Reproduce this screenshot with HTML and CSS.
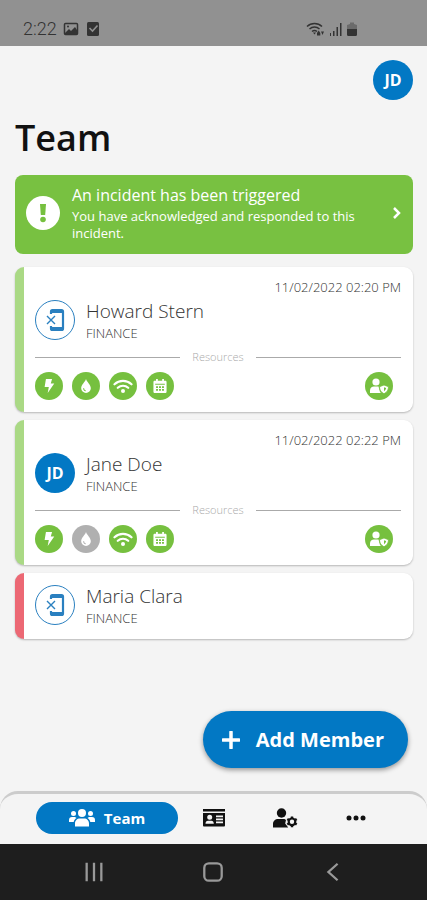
FILE: index.html
```html
<!DOCTYPE html>
<html lang="en">

<head>
    <meta charset="UTF-8">
    <meta name="viewport" content="width=device-width, initial-scale=1.0">
    <title>Team</title>
    <link rel="stylesheet" href="styles.css">
</head>

<body>

    <!-- shared icons -->
    <svg class="sprite" aria-hidden="true">
        <symbol id="bolt" viewBox="0 0 16 16">
            <path d="M4.500 0h7L10 5h4L6.500 16l1.300-6.800H3z" />
        </symbol>
        <symbol id="drop" viewBox="0 0 16 16">
            <path d="M8 0C9 3.500 13.500 6.500 13.500 10.500a5.500 5.500 0 0 1-11 0C2.500 6.500 7 3.500 8 0zM5 10.200c-.6 2 .8 3.700 2.800 3.700v-.9c-1.400 0-2.200-1.200-1.900-2.600z" fill-rule="evenodd" />
        </symbol>
        <symbol id="wifi" viewBox="0 0 20 16">
            <path d="M1.500 6.300a12.500 12.500 0 0 1 17 0M4.800 9.800a7.600 7.600 0 0 1 10.400 0" fill="none" stroke="currentColor" stroke-width="2.200" stroke-linecap="round" />
            <circle cx="10" cy="13" r="2" />
        </symbol>
        <symbol id="calendar" viewBox="0 0 16 16">
            <path fill-rule="evenodd" d="M3.500 0h2v2h5V0h2v2H14c.8 0 1.500.6 1.500 1.400v11.200c0 .8-.7 1.400-1.500 1.400H2C1.200 16 .5 15.400.5 14.600V3.400C.5 2.600 1.200 2 2 2h1.500zM2.500 5.500v1h11v-1zM3.500 8.300v2h2.200v-2zm3.400 0v2h2.200v-2zm3.400 0v2h2.200v-2zM3.500 11.500v2h2.200v-2zm3.400 0v2h2.200v-2zm3.400 0v2h2.200v-2z" />
        </symbol>
        <symbol id="shield" viewBox="0 0 20 16">
            <circle cx="7" cy="4" r="3.600" />
            <path d="M1 15v-2.500C1 10 2.800 8.500 5 8.500h4.500L11 14l1 1z" />
            <path d="M15 7l4.500 1.700c0 3.300-1.500 5.600-4.500 7.100-3-1.500-4.500-3.800-4.500-7.100z" stroke="#76c03f" stroke-width=".8" />
            <path d="M15 9.300v4c1.200-.8 1.900-1.800 2.100-3.200z" fill="#76c03f" />
        </symbol>
        <symbol id="device" viewBox="0 0 24 24">
            <path d="M8 6V3.500C8 2.700 8.500 2 9.300 2h9.200c.8 0 1.500.7 1.500 1.500v17c0 .8-.7 1.500-1.500 1.500H9.300C8.500 22 8 21.300 8 20.500V18M8 4h12M8 20h12" fill="none" stroke="currentColor" stroke-width="2.200" />
            <path d="M4 8l8 8M12 8l-8 8" fill="none" stroke="currentColor" stroke-width="1.400" />
        </symbol>
    </svg>

    <div class="status-bar">
        <span class="clock">2:22</span>
        <svg class="status-icon" viewBox="0 0 16 16">
            <rect x="1.500" y="2.500" width="13" height="11" rx="1" fill="none" stroke="currentColor" stroke-width="1.500" />
            <path d="M2 12l4-4 2 2 4-4 2 3v4H2z" />
            <circle cx="5" cy="5.500" r="1" />
        </svg>
        <svg class="status-icon" viewBox="0 0 16 16">
            <rect x="2" y="1" width="12" height="14" rx="1.500" />
            <path d="M4.500 7l3 3 5-5.500" fill="none" stroke="#919191" stroke-width="1.600" />
        </svg>
        <div class="signals">
            <svg width="20" height="16" viewBox="0 0 20 16">
                <path d="M1 5.500a11 11 0 0 1 15 0M3.500 8a7.500 7.500 0 0 1 10 0M6 10.500a4 4 0 0 1 5 0" fill="none" stroke="currentColor" stroke-width="1.500" />
                <path d="M7 11.500h3L8.500 13.500zM11 12l1.700-2.500 1.600 2.500v2.500H11zM15 10.500h3L16.500 14z" />
            </svg>
            <svg width="16" height="16" viewBox="0 0 16 16">
                <path d="M2 12h1v3H2zM5 10h1.500v5H5zM8.500 6H10v9H8.500zM12 2h1.500v13H12z" />
            </svg>
            <svg width="12" height="16" viewBox="0 0 12 16">
                <path d="M1 4l3-1V1.500h4V3l3 1v5H1z" opacity=".4" />
                <path d="M1 8h10v5.500c0 .8-.5 1.500-1.300 1.500H2.300C1.500 15 1 14.300 1 13.500z" />
            </svg>
        </div>
    </div>

    <main class="page">
        <div class="profile">
            <button class="avatar" type="button">JD</button>
        </div>
        <h1>Team</h1>

        <a class="banner" href="#">
            <svg class="banner-icon" viewBox="0 0 34 34">
                <circle cx="17" cy="17" r="17" fill="#fff" />
                <path d="M14 8h6l-.8 11h-4.400z" fill="#76c03f" />
                <circle cx="17" cy="23.500" r="2.800" fill="#76c03f" />
            </svg>
            <span class="banner-text">
                <strong>An incident has been triggered</strong>
                <span>You have acknowledged and responded to this incident.</span>
            </span>
            <svg class="chevron" viewBox="0 0 10 16">
                <path d="M2 3l5 5-5 5" fill="none" stroke="currentColor" stroke-width="2.500" />
            </svg>
        </a>

        <div class="members">
            <article class="card">
                <time class="date">11/02/2022 02:20 PM</time>
                <div class="person">
                    <span class="avatar outline"><svg><use href="#device" /></svg></span>
                    <div>
                        <h2>Howard Stern</h2>
                        <p>FINANCE</p>
                    </div>
                </div>
                <div class="divider">Resources</div>
                <div class="resources">
                    <span class="resource"><svg><use href="#bolt" /></svg></span>
                    <span class="resource"><svg><use href="#drop" /></svg></span>
                    <span class="resource"><svg class="wide"><use href="#wifi" /></svg></span>
                    <span class="resource"><svg><use href="#calendar" /></svg></span>
                    <span class="resource role"><svg class="wide"><use href="#shield" /></svg></span>
                </div>
            </article>

            <article class="card">
                <time class="date">11/02/2022 02:22 PM</time>
                <div class="person">
                    <span class="avatar">JD</span>
                    <div>
                        <h2>Jane Doe</h2>
                        <p>FINANCE</p>
                    </div>
                </div>
                <div class="divider">Resources</div>
                <div class="resources">
                    <span class="resource"><svg><use href="#bolt" /></svg></span>
                    <span class="resource off"><svg><use href="#drop" /></svg></span>
                    <span class="resource"><svg class="wide"><use href="#wifi" /></svg></span>
                    <span class="resource"><svg><use href="#calendar" /></svg></span>
                    <span class="resource role"><svg class="wide"><use href="#shield" /></svg></span>
                </div>
            </article>

            <article class="card alert">
                <div class="person">
                    <span class="avatar outline"><svg><use href="#device" /></svg></span>
                    <div>
                        <h2>Maria Clara</h2>
                        <p>FINANCE</p>
                    </div>
                </div>
            </article>
        </div>

        <button class="add" type="button">
            <svg viewBox="0 0 18 18">
                <path d="M9 1v16M1 9h16" stroke="currentColor" stroke-width="3.500" stroke-linecap="round" />
            </svg>
            Add Member
        </button>
    </main>

    <nav class="tabs">
        <a class="tab active" href="#">
            <svg width="26" height="20" viewBox="0 0 26 20">
                <circle cx="13" cy="5" r="4" />
                <circle cx="4.500" cy="5.500" r="2.500" />
                <circle cx="21.500" cy="5.500" r="2.500" />
                <path d="M6 18.500v-2.800C6 12.500 8 10.500 11 10.500h4c3 0 5 2 5 5.200v2.800zM0 14v-2c0-2 1-3 3-3h3l1.500 1C6 11 5 12.200 4.700 14zM26 14v-2c0-2-1-3-3-3h-3l-1.500 1c1.500 1 2.500 2.200 2.800 4z" />
            </svg>
            Team
        </a>
        <a class="tab" href="#" aria-label="Contacts">
            <svg width="24" height="20" viewBox="0 0 24 20">
                <path fill-rule="evenodd" d="M1 1h22v2.500H1zM1 5h22v12.500c0 .5-.5 1-1 1H2c-.5 0-1-.5-1-1zM3.500 15.800h8.300c0-2-1-3-2.500-3H6c-1.500 0-2.500 1-2.500 3zM7.700 6.700a2.500 2.500 0 1 0 0 5 2.500 2.500 0 1 0 0-5zM14 7.500v1.700h7V7.500zm0 3v1.700h7v-1.700zm0 3v1.700h7v-1.700z" />
            </svg>
        </a>
        <a class="tab" href="#" aria-label="Member settings">
            <svg width="26" height="20" viewBox="0 0 26 20">
                <circle cx="9.500" cy="5" r="4.700" />
                <path d="M1 19.500v-3.300C1 13 3 11 6.500 11h6l1.500 1-.8 3.500 3 4z" />
                <circle cx="20" cy="13.800" r="3.300" fill="none" stroke="currentColor" stroke-width="2.200" />
                <path d="M20 8.500v2M20 17v2.300M15.300 11l1.800 1.200M22.900 15.400l1.800 1.200M24.700 11l-1.800 1.200M17.100 15.400l-1.800 1.200" stroke="currentColor" stroke-width="2.400" />
            </svg>
        </a>
        <a class="tab" href="#" aria-label="More">
            <svg width="20" height="20" viewBox="0 0 20 20">
                <circle cx="3" cy="10" r="2.500" />
                <circle cx="10" cy="10" r="2.500" />
                <circle cx="17" cy="10" r="2.500" />
            </svg>
        </a>
    </nav>

    <div class="system-bar">
        <button type="button" aria-label="Recent apps">
            <svg viewBox="0 0 24 24"><path d="M4 2v20M12 2v20M20 2v20" /></svg>
        </button>
        <button type="button" aria-label="Home">
            <svg viewBox="0 0 24 24"><rect x="2.500" y="2.500" width="19" height="19" rx="5" /></svg>
        </button>
        <button type="button" aria-label="Back">
            <svg viewBox="0 0 24 24"><path d="M17 3L7 12l10 9" /></svg>
        </button>
    </div>

</body>

</html>
```
FILE: styles.css
```css
* {
    box-sizing: border-box;
}

body {
    margin: 0;
    min-height: 100vh;
    display: flex;
    flex-direction: column;
    background: #f4f4f4;
    color: #333;
    font-family: "Open Sans", "Noto Sans", sans-serif;
}

h1,
h2,
p {
    margin: 0;
}

a {
    color: inherit;
    text-decoration: none;
}

button {
    border: 0;
    padding: 0;
    font-family: inherit;
}

svg {
    display: block;
    fill: currentColor;
    flex: none;
}

.sprite {
    position: absolute;
    width: 0;
    height: 0;
}

/* status bar */
.status-bar {
    display: flex;
    align-items: center;
    gap: 6px;
    height: 46px;
    padding: 12px 69px 0 23px;
    background: #919191;
    color: #333;
}

.clock {
    font-family: Roboto, sans-serif;
    font-size: 18px;
    line-height: 20px;
    font-weight: 300;
}

.status-icon {
    width: 16px;
    height: 16px;
}

.signals {
    display: flex;
    gap: 2px;
    margin-left: auto;
}

/* page */
.page {
    flex: 1;
    display: flex;
    flex-direction: column;
    padding: 14px 14px 23px 15px;
}

.profile {
    display: flex;
    justify-content: flex-end;
}

.avatar {
    display: flex;
    align-items: center;
    justify-content: center;
    flex: none;
    width: 40px;
    height: 40px;
    border-radius: 50%;
    background: #0278c4;
    color: #fff;
    font-size: 16px;
    font-weight: 700;
}

.avatar.outline {
    border: 1px solid #2a80c0;
    background: #fff;
    color: #2a80c0;
}

.avatar svg {
    width: 24px;
    height: 24px;
}

h1 {
    margin: 16px 0 15px;
    color: #111;
    font-size: 36px;
    line-height: 44px;
    font-weight: 600;
}

.banner {
    display: flex;
    align-items: center;
    gap: 12px;
    min-height: 79px;
    padding: 8px 11px 12px;
    border-radius: 8px;
    background: #78c141;
    color: #fff;
}

.banner-icon {
    width: 34px;
    height: 34px;
}

.banner-text {
    flex: 1;
    font-size: 13px;
    line-height: 17px;
}

.banner-text strong {
    display: block;
    font-size: 16px;
    line-height: 25px;
    font-weight: 400;
}

.chevron {
    width: 10px;
    height: 16px;
}

.members {
    display: flex;
    flex-direction: column;
    gap: 8px;
    margin: 13px 0 24px;
}

.card {
    padding: 12px 12px 12px 11px;
    border-left: 9px solid #aad985;
    border-radius: 9px;
    background: #fff;
    box-shadow: 0 1px 2px rgba(0, 0, 0, 0.25);
}

.card.alert {
    padding-bottom: 10px;
    border-left-color: #ec6874;
}

.date {
    display: block;
    margin-bottom: 5px;
    font-size: 13px;
    line-height: 16px;
    font-weight: 300;
    text-align: right;
}

.person {
    display: flex;
    align-items: flex-start;
    gap: 11px;
}

.person h2 {
    font-size: 19px;
    line-height: 22px;
    font-weight: 300;
}

.person p {
    font-size: 13px;
    line-height: 22px;
    font-weight: 300;
}

.divider {
    display: flex;
    align-items: center;
    gap: 12px;
    margin: 4px 0 6px;
    color: #aaa;
    font-size: 11px;
    line-height: 18px;
    font-weight: 300;
}

.divider::before,
.divider::after {
    content: "";
    flex: 1;
    height: 1px;
    background: #aaa;
}

.resources {
    display: flex;
    gap: 9px;
}

.resource {
    display: flex;
    align-items: center;
    justify-content: center;
    width: 28px;
    height: 28px;
    border-radius: 50%;
    background: #76c03f;
    color: #fff;
}

.resource svg {
    width: 14px;
    height: 14px;
}

.resource svg.wide {
    width: 20px;
    height: 16px;
}

.resource.off {
    background: #b0b0b0;
}

.resource.role {
    margin-left: auto;
    margin-right: 8px;
}

.add {
    display: flex;
    align-items: center;
    gap: 16px;
    height: 57px;
    margin: auto 5px 0 auto;
    padding: 0 24px 0 19px;
    border-radius: 29px;
    background: #0278c4;
    color: #fff;
    font-size: 20px;
    font-weight: 700;
    box-shadow: 0 2px 5px rgba(0, 0, 0, 0.4);
}

.add svg {
    width: 18px;
    height: 18px;
}

/* bottom navigation */
.tabs {
    display: grid;
    grid-template-columns: 2fr 1fr 1fr 1fr;
    padding: 8px 36px 10px;
    border-top: 3px solid #ccc;
    border-radius: 18px 18px 0 0;
    color: #111;
}

.tab {
    display: flex;
    align-items: center;
    justify-content: center;
    gap: 9px;
    height: 32px;
    border-radius: 16px;
    font-size: 15px;
    font-weight: 700;
}

.tab.active {
    background: #0278c4;
    color: #fff;
}

.system-bar {
    display: grid;
    grid-template-columns: repeat(3, 1fr);
    height: 56px;
    padding: 0 34px;
    background: #1e1e1e;
}

.system-bar button {
    display: flex;
    align-items: center;
    justify-content: center;
    background: none;
    color: #999;
}

.system-bar svg {
    width: 22px;
    height: 22px;
    fill: none;
    stroke: currentColor;
    stroke-width: 2.5;
}
```
